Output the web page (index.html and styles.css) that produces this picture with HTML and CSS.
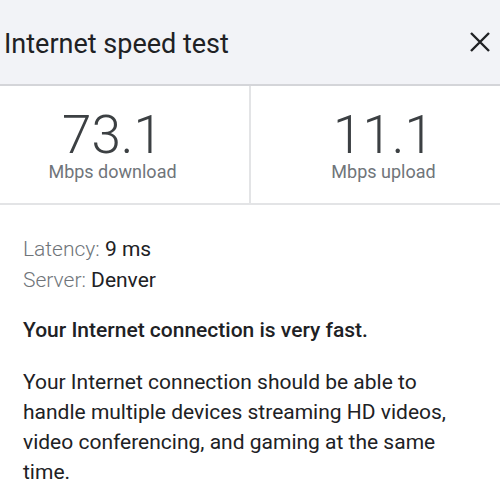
FILE: index.html
```html
<!DOCTYPE html>
<html lang="en">
<head>
    <meta charset="UTF-8">
    <meta name="viewport" content="width=device-width, initial-scale=1.0">
    <title>Internet speed test</title>
    <link rel="stylesheet" href="styles.css">
</head>
<body>
    <div class="header">
        <h1 class="title">Internet speed test</h1>
        <button class="close" aria-label="Close">
            <svg width="20" height="20" viewBox="0 0 20 20">
                <path d="M1 1 L19 19 M19 1 L1 19" stroke="#202124" stroke-width="2.4" fill="none"/>
            </svg>
        </button>
    </div>
    <div class="results">
        <div class="result download">
            <div class="value">73.1</div>
            <div class="unit">Mbps download</div>
        </div>
        <div class="result upload">
            <div class="value">11.1</div>
            <div class="unit">Mbps upload</div>
        </div>
    </div>
    <div class="details">
        <div class="info"><span class="label">Latency:</span> 9 ms</div>
        <div class="info"><span class="label">Server:</span> Denver</div>
        <p class="summary">Your Internet connection is very fast.</p>
        <p class="desc">Your Internet connection should be able to handle multiple devices streaming HD videos, video conferencing, and gaming at the same time.</p>
    </div>
</body>
</html>
```

FILE: styles.css
```css
body {
    font-family: Roboto, "Noto Sans", sans-serif;
    margin: 0;
    padding: 0;
    background-color: #fff;
    color: #202124;
}
.header {
    display: flex;
    align-items: center;
    justify-content: space-between;
    height: 84px;
    padding: 0 10px 0 4px;
    background-color: #f2f3f7;
    border-bottom: 2px solid #d4d5d9;
}
.title {
    margin: 4px 0 0;
    font-size: 27px;
    font-weight: 400;
}
.close {
    display: flex;
    padding: 0;
    border: none;
    background: none;
    cursor: pointer;
}
.results {
    display: grid;
    grid-template-columns: 249px 1fr;
    border-bottom: 2px solid #e3e4e6;
}
.result {
    height: 117px;
    text-align: center;
}
.download {
    padding-right: 24px;
}
.upload {
    padding-left: 16px;
    border-left: 2px solid #e3e4e6;
}
.value {
    margin-top: 24px;
    font-size: 53px;
    font-weight: 300;
    line-height: 50px;
    color: #3c4043;
}
.unit {
    font-size: 18px;
    line-height: 24px;
    color: #70757a;
}
.details {
    padding: 29px 23px 0;
    font-size: 21px;
}
.info {
    line-height: 31px;
}
.label {
    font-weight: 300;
    color: #70757a;
}
.summary {
    margin: 19px 0 0;
    line-height: 31px;
    font-weight: 500;
}
.desc {
    margin: 21px 0 0;
    line-height: 30px;
}
```
